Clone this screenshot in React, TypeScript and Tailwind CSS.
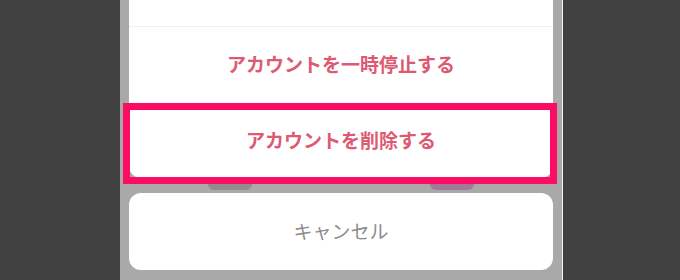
const FONT = { fontFamily: '"Noto Sans CJK JP", "Noto Sans", sans-serif' }

const App = () => {
  return (
    <div className="flex h-[280px] w-[680px] overflow-hidden bg-[#414141]" style={FONT}>
      <div className="w-[120px] shrink-0" />
      <div className="relative flex w-[443px] shrink-0 flex-col border-r border-[#f4f4f4] bg-[#a9a9a9] px-[9px]">
        {/* action sheet */}
        <div className="flex flex-col rounded-b-[12px] bg-white">
          <div className="h-[27px] border-b border-[#f1f1f1]" />
          <div className="flex h-[75px] items-center justify-center text-[19px] font-semibold text-[#dd5a73]">
            アカウントを一時停止する
          </div>
          <div className="flex h-[76px] items-center justify-center text-[19px] font-semibold text-[#dd5a73]">
            アカウントを削除する
          </div>
        </div>
        <div className="mt-[15px] flex h-[77px] items-center justify-center rounded-[12px] bg-white text-[19px] text-[#8c8c8c]">
          キャンセル
        </div>

        {/* blurred bits peeking under the highlight */}
        <div className="absolute left-[88px] top-[183px] h-[7px] w-[44px] rounded-b-[6px] bg-[#8e8e8e]" />
        <div className="absolute left-[310px] top-[183px] h-[7px] w-[44px] rounded-b-[6px] bg-[#a27a99]" />

        {/* highlight */}
        <div className="absolute left-[3px] top-[103px] h-[81px] w-[434px] border-[7px] border-[#fc0d63]" />
      </div>
    </div>
  )
}

export default App
